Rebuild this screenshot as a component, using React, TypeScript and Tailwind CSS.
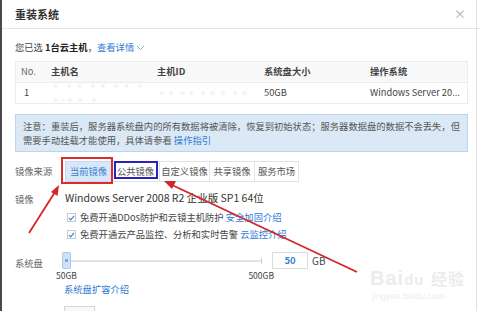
import React from 'react';

const tabs = [
  { label: '当前镜像', w: 'w-[47px]', active: true },
  { label: '公共镜像', w: 'w-[48px]', active: false },
  { label: '自定义镜像', w: 'w-[50px]', active: false },
  { label: '共享镜像', w: 'w-[45px]', active: false },
  { label: '服务市场', w: 'w-[44px]', active: false },
];

const Check = () => (
  <span className="w-[9px] h-[9px] border border-[#c8c8c8] bg-white flex items-center justify-center mr-[4px]">
    <svg width="8" height="8" viewBox="0 0 8 8">
      <path d="M1 4.2 L3.1 6.2 L7 1.6" fill="none" stroke="#3a7fd0" strokeWidth="1.3" />
    </svg>
  </span>
);

export default function App() {
  return (
    <div
      className="relative w-[480px] h-[311px] overflow-hidden bg-white border-l-2 border-[#4a4a4a] text-[#333]"
      style={{ fontFamily: '"Noto Sans CJK SC", "Noto Sans", sans-serif' }}
    >
      <div className="absolute right-[3px] top-0 bottom-0 w-px bg-[#e2e2e2]" />

      {/* header */}
      <div className="h-[29px] flex items-center justify-between pl-[13px] pr-[14px] border-b border-[#e6e6e6]">
        <span className="text-[11px] font-bold text-[#333] leading-none">重装系统</span>
        <span className="text-[12px] text-[#aaa] leading-none">×</span>
      </div>

      <div className="pl-[13px] pr-[12px]">
        <div className="mt-[11px] h-[16px] flex items-center text-[9.3px] text-[#444]">
          <span>您已选&nbsp;</span>
          <span className="font-bold text-[#222]">1台云主机</span>
          <span>，</span>
          <span className="text-[#2f7bd6]">查看详情</span>
          <svg width="9" height="6" viewBox="0 0 9 6" className="ml-[2px]">
            <path d="M1 1 L4.5 4.5 L8 1" fill="none" stroke="#8aa9d0" strokeWidth="1" />
          </svg>
        </div>

        {/* table */}
        <div className="mt-[5px] border border-[#ececec] text-[9.3px]">
          <div className="h-[21px] flex items-center bg-[#f8f8f8] border-b border-[#ececec] font-bold text-[#444]">
            <span className="w-[35px] pl-[5px] font-normal text-[#666]">No.</span>
            <span className="w-[106px]">主机名</span>
            <span className="w-[107px]">主机ID</span>
            <span className="w-[106px]">系统盘大小</span>
            <span>操作系统</span>
          </div>
          <div className="h-[20px] flex items-center text-[#444]">
            <span className="w-[35px] pl-[8px]">1</span>
            <span className="w-[106px] text-[#ccc] blur-[1px] tracking-[1px]">· ·· ·· ·· · ·-·· ·</span>
            <span className="w-[107px] text-[#ccc] blur-[1px]">·· ·· ·· · ··</span>
            <span className="w-[106px]">50GB</span>
            <span>Windows Server 20...</span>
          </div>
        </div>

        {/* notice */}
        <div className="mt-[10px] h-[38px] bg-[#dbe9f7] border border-[#bcd5ee] px-[7px] pt-[5px] text-[9.3px] leading-[13.5px] text-[#555]">
          <div>注意：重装后，服务器系统盘内的所有数据将被清除，恢复到初始状态；服务器数据盘的数据不会丢失，但</div>
          <div>
            需要手动挂载才能使用，具体请参看 <span className="text-[#2f7bd6]">操作指引</span>
          </div>
        </div>

        {/* image source */}
        <div className="mt-[9px] flex items-center">
          <span className="w-[50px] text-[9.3px] text-[#666]">镜像来源</span>
          <div className="flex h-[21px]">
            {tabs.map(t => (
              <div
                key={t.label}
                className={
                  t.active
                    ? `${t.w} flex items-center justify-center text-[9.3px] bg-[#d8e8f8] text-[#3a80d0] border border-[#c5daf0]`
                    : `${t.w} flex items-center justify-center text-[9.3px] text-[#555] border border-l-0 border-[#e3e3e3]`
                }
              >
                {t.label}
              </div>
            ))}
          </div>
        </div>

        {/* image */}
        <div className="mt-[8px] flex">
          <span className="w-[50px] pt-[3px] text-[9.3px] text-[#666]">镜像</span>
          <div>
            <div className="h-[16px] flex items-center text-[10.5px] text-[#333]">Windows Server 2008 R2 企业版 SP1 64位</div>
            <div className="mt-[3px] h-[17px] flex items-center text-[9.3px] text-[#444] pl-[2px]">
              <Check />
              免费开通DDos防护和云镜主机防护&nbsp;<span className="text-[#2f7bd6]">安全加固介绍</span>
            </div>
            <div className="h-[17px] flex items-center text-[9.3px] text-[#444] pl-[2px]">
              <Check />
              免费开通云产品监控、分析和实时告警&nbsp;<span className="text-[#2f7bd6]">云监控介绍</span>
            </div>
          </div>
        </div>

        {/* system disk */}
        <div className="mt-[9px] flex">
          <span className="w-[47px] pt-[5px] text-[9.3px] text-[#666]">系统盘</span>
          <div className="w-[200px]">
            <div className="h-[17px] flex items-center">
              <div className="w-[9px] h-[17px] rounded-[2px] bg-[#cfe2f7] border border-[#a9c8ec] flex items-center justify-center">
                <span className="w-[3px] h-[3px] bg-[#7fa9dc]" />
              </div>
              <div className="flex-1 h-[2px] bg-[#e2e2e2]" />
              <div className="w-px h-[6px] bg-[#cfcfcf]" />
            </div>
            <div className="flex justify-between text-[8.5px] text-[#444] -ml-[6px] -mr-[12px]">
              <span>50GB</span>
              <span>500GB</span>
            </div>
            <div className="mt-[1px] ml-[2px] text-[9.3px] text-[#2f7bd6]">系统盘扩容介绍</div>
          </div>
          <div className="ml-[10px] w-[36px] h-[17px] border border-[#dcdcdc] flex items-center justify-center text-[9.5px] font-bold text-[#3a80d0]">
            50
          </div>
          <span className="ml-[4px] h-[17px] flex items-center text-[10px] text-[#444]">GB</span>
        </div>

        <div className="mt-[9px] ml-[49px] w-[31px] h-[10px] border border-[#d6d6d6] bg-[#f7f7f7]" />
      </div>

      {/* watermark */}
      <div className="absolute left-[368px] top-[268px] text-[#ececec] select-none">
        <div className="text-[20px] font-bold leading-none tracking-[1px]" style={{ fontFamily: '"Liberation Sans", sans-serif' }}>
          Bai<span className="text-[15px]">du</span> <span className="text-[16px]" style={{ fontFamily: '"Noto Sans CJK SC", sans-serif' }}>经验</span>
        </div>
        <div className="text-[9px] leading-none mt-[4px] ml-[2px]" style={{ fontFamily: '"Liberation Sans", sans-serif' }}>jingyan.baidu.com</div>
      </div>

      {/* annotations */}
      <svg className="absolute left-0 top-0 pointer-events-none" width="480" height="311" viewBox="0 0 480 311">
        <rect x="60" y="158" width="50" height="25" fill="none" stroke="#dc2b2b" strokeWidth="2" />
        <rect x="113" y="162" width="42" height="16" fill="none" stroke="#2b20c0" strokeWidth="2" />
        <line x1="27" y1="233" x2="53" y2="192" stroke="#d42626" strokeWidth="1.8" />
        <polygon points="57,185 55.5,196 49,192" fill="#d42626" />
        <line x1="355" y1="272" x2="170" y2="185" stroke="#d42626" strokeWidth="1.8" />
        <polygon points="162,181 174,181 170,189" fill="#d42626" />
      </svg>
    </div>
  );
}
